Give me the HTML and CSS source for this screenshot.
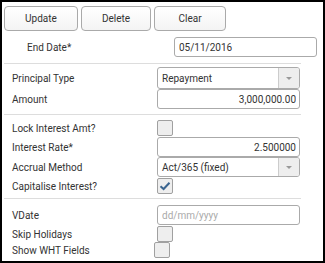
FILE: index.html
```html
<!DOCTYPE html>
<html lang="en">
<head>
    <meta charset="UTF-8">
    <title>Loan Details</title>
    <link rel="stylesheet" href="styles.css">
</head>
<body>
    <div class="panel">
        <div class="toolbar">
            <button class="btn btn-update">Update</button>
            <button class="btn btn-delete">Delete</button>
            <button class="btn btn-clear">Clear</button>
        </div>

        <div class="end-row">
            <label class="end-label">End Date*</label>
            <input class="field end-field" type="text" value="05/11/2016">
        </div>

        <div class="sep sep-1"></div>

        <div class="row row-select">
            <label class="label">Principal Type</label>
            <div class="select select-tall">
                <span class="select-text">Repayment</span>
                <span class="select-arrow"><span class="caret"></span></span>
            </div>
        </div>
        <div class="row">
            <label class="label">Amount</label>
            <input class="field num" type="text" value="3,000,000.00">
        </div>

        <div class="sep sep-2"></div>

        <div class="row row-check row-lock">
            <label class="label">Lock Interest Amt?</label>
            <span class="check"></span>
        </div>
        <div class="row">
            <label class="label">Interest Rate*</label>
            <input class="field num" type="text" value="2.500000">
        </div>
        <div class="row">
            <label class="label">Accrual Method</label>
            <div class="select">
                <span class="select-text">Act/365 (fixed)</span>
                <span class="select-arrow"><span class="caret"></span></span>
            </div>
        </div>
        <div class="row row-check row-cap">
            <label class="label">Capitalise Interest?</label>
            <span class="check">
                <svg width="12" height="10" viewBox="0 0 12 10"><path d="M1.5 5.2 L4.6 8 L10.5 1.8" fill="none" stroke="#3b6590" stroke-width="2"/></svg>
            </span>
        </div>

        <div class="sep sep-3"></div>

        <div class="row row-vdate">
            <label class="label">VDate</label>
            <input class="field" type="text" placeholder="dd/mm/yyyy">
        </div>
        <div class="row row-check row-skip">
            <label class="label">Skip Holidays</label>
            <span class="check"></span>
        </div>
        <div class="row row-check row-wht">
            <label class="label label-wht">Show WHT Fields</label>
            <span class="check"></span>
        </div>
    </div>
</body>
</html>
```

FILE: styles.css
```css
body {
    margin: 0;
    padding: 0;
    font-family: Roboto, "Liberation Sans", Arial, sans-serif;
    font-size: 10px;
    color: #333;
    background: #fff;
}
.panel {
    width: 325px;
    height: 263px;
    box-sizing: border-box;
    border: 2px solid #000;
    padding: 4px 2px 0 2px;
}
.toolbar {
    display: flex;
    gap: 2px;
    height: 25px;
}
.btn {
    height: 25px;
    box-sizing: border-box;
    border: 1px solid #aaa;
    border-radius: 4px;
    background: linear-gradient(#fff, #f4f4f4);
    font-family: inherit;
    font-size: 10px;
    color: #333;
    padding: 0;
}
.btn-update {
    width: 74px;
}
.btn-delete {
    width: 70px;
    margin-left: 1px;
}
.btn-clear {
    width: 72px;
    margin-left: 1px;
}
.end-row {
    display: flex;
    align-items: center;
    margin-top: 6px;
    height: 20px;
}
.end-label {
    width: 147px;
    padding-left: 23px;
}
.field {
    width: 143px;
    height: 20px;
    box-sizing: border-box;
    border: 1px solid #aaa;
    border-radius: 3px;
    padding: 0 4px;
    font-family: inherit;
    font-size: 10px;
    color: #333;
    outline: none;
    margin: 0;
}
.field::placeholder {
    color: #aaa;
}
.num {
    text-align: right;
    padding-right: 3px;
}
.sep {
    width: 297px;
    height: 1px;
    background: #ddd;
}
.sep-1 {
    margin-top: 6px;
}
.sep-2 {
    margin-top: 5px;
}
.sep-3 {
    margin-top: 4px;
}
.row {
    display: flex;
    align-items: center;
    height: 20px;
    padding-left: 8px;
}
.label {
    width: 145px;
}
.row-select {
    margin-top: 3px;
    height: 22px;
}
.row-check {
    height: 16px;
}
.row-lock {
    margin-top: 5px;
    margin-bottom: 1px;
}
.row-cap {
    margin-top: 1px;
}
.row-vdate {
    margin-top: 6px;
}
.row-skip {
    margin-top: 1px;
}
.label-wht {
    width: 142px;
}
.select {
    display: flex;
    width: 143px;
    height: 20px;
    box-sizing: border-box;
    border: 1px solid #aaa;
    border-radius: 3px;
    overflow: hidden;
}
.select-tall {
    height: 22px;
}
.select-text {
    flex: 1;
    display: flex;
    align-items: center;
    padding-left: 4px;
}
.select-arrow {
    width: 20px;
    background: #eee;
    border-left: 1px solid #ccc;
    display: flex;
    align-items: center;
    justify-content: center;
}
.caret {
    width: 0;
    height: 0;
    border-left: 3px solid transparent;
    border-right: 3px solid transparent;
    border-top: 3px solid #999;
}
.check {
    width: 16px;
    height: 16px;
    box-sizing: border-box;
    border: 1px solid #a0a0a0;
    border-radius: 2px;
    background: #eee;
    display: flex;
    align-items: center;
    justify-content: center;
}
```
